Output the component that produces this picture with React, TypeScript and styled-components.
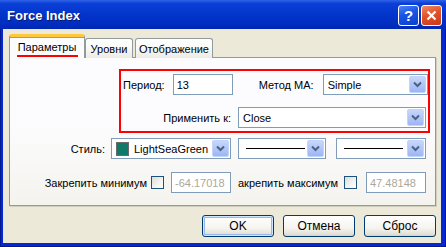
import React from 'react';
import styled, { createGlobalStyle, css } from 'styled-components';

const GlobalStyle = createGlobalStyle`
  html, body {
    margin: 0;
    padding: 0;
    background: #ffffff;
  }
  body {
    font-family: "Liberation Sans", Arial, sans-serif;
    font-size: 11px;
    color: #000000;
  }
`;

// окно
const Window = styled.div`
  width: 446px;
  height: 247px;
  box-sizing: border-box;
  display: flex;
  flex-direction: column;
  background: #0628d0;
  box-shadow: inset 1px 0 0 #001890, inset -1px 0 0 #001890, inset 0 -1px 0 #001890;
`;

const TitleBar = styled.div`
  height: 29px;
  flex: none;
  display: flex;
  align-items: center;
  padding: 0 4px 0 7px;
  background: linear-gradient(180deg, #2f63e6 0%, #0b40d8 12%, #0336cc 45%, #002dbf 85%, #0028b0 100%);
`;

const Title = styled.span`
  flex: 1;
  color: #ffffff;
  font-weight: bold;
  font-size: 13px;
  margin-top: 1px;
  text-shadow: 1px 1px 0 #0a1870;
`;

const CaptionButton = styled.div<{ $close?: boolean }>`
  width: 21px;
  height: 21px;
  box-sizing: border-box;
  margin-left: 2px;
  margin-top: 1px;
  border: 1px solid #ffffff;
  border-radius: 3px;
  display: flex;
  align-items: center;
  justify-content: center;
  color: #ffffff;
  font-weight: bold;
  font-size: 15px;
  background: linear-gradient(160deg, #4f84f2 0%, #1a56e6 40%, #0a40d0 100%);
  ${({ $close }) => $close && css`
    background: linear-gradient(160deg, #f08a66 0%, #e0522a 45%, #c9381a 100%);
  `}
`;

const Client = styled.div`
  flex: 1;
  margin: 0 5px 4px 3px;
  background: #ece9d8;
  padding: 6px 5px 0 6px;
  display: flex;
  flex-direction: column;
`;

// вкладки
const TabStrip = styled.div`
  height: 23px;
  display: flex;
  align-items: flex-end;
  margin-bottom: -1px;
  position: relative;
  z-index: 1;
`;

const Tab = styled.div<{ $active?: boolean; $width: number }>`
  width: ${({ $width }) => $width}px;
  height: 20px;
  box-sizing: border-box;
  border: 1px solid #919b9c;
  border-bottom: none;
  border-radius: 3px 3px 0 0;
  background: linear-gradient(180deg, #ffffff 0%, #fafaf8 40%, #ecebe5 100%);
  display: flex;
  align-items: center;
  justify-content: center;
  padding-top: 1px;
  margin-left: 2px;
  position: relative;

  ${({ $active }) => $active && css`
    height: 24px;
    margin-left: 0;
    margin-right: -2px;
    z-index: 2;
    background: #fcfcfe;
    border-top: 3px solid #ffc83c;
    box-shadow: inset 0 1px 0 #e68b2c;
    padding-top: 0;
    padding-bottom: 2px;
  `}
`;

const Underlined = styled.span`
  position: relative;
  &::after {
    content: '';
    position: absolute;
    left: -1px;
    right: -2px;
    bottom: -4px;
    height: 2px;
    background: #ff0000;
  }
`;

const Panel = styled.div`
  width: 427px;
  height: 149px;
  box-sizing: border-box;
  border: 1px solid #919b9c;
  background: linear-gradient(180deg, #fcfcfe 0%, #fcfcfe 45%, #f4f3ee 100%);
  box-shadow: 1px 1px 0 #d0cebf;
  padding: 11px 9px 0 0;
  display: flex;
  flex-direction: column;
`;

const Highlight = styled.div`
  margin-left: 109px;
  margin-right: -4px;
  border: 2px solid #ff0000;
  padding: 3px 2px 3px 2px;
  display: flex;
  flex-direction: column;
  gap: 12px;
`;

const Row = styled.div<{ $top?: number }>`
  display: flex;
  align-items: center;
  height: 21px;
  margin-top: ${({ $top }) => $top ?? 0}px;
`;

const Label = styled.div<{ $width?: number; $pad?: number; $left?: boolean }>`
  ${({ $width }) => ($width ? css`width: ${$width}px; flex: none;` : css`flex: 1;`)}
  box-sizing: border-box;
  text-align: ${({ $left }) => ($left ? 'left' : 'right')};
  padding-right: ${({ $pad }) => $pad ?? 0}px;
  white-space: nowrap;
`;

const TextInput = styled.div<{ $width: number; $disabled?: boolean }>`
  width: ${({ $width }) => $width}px;
  height: 21px;
  flex: none;
  box-sizing: border-box;
  border: 1px solid #7f9db9;
  background: #ffffff;
  padding-left: 3px;
  display: flex;
  align-items: center;
  color: ${({ $disabled }) => ($disabled ? '#aca899' : '#000000')};
`;

const Select = styled.div<{ $width: number; $gap?: number }>`
  width: ${({ $width }) => $width}px;
  height: 21px;
  flex: none;
  box-sizing: border-box;
  margin-left: ${({ $gap }) => $gap ?? 0}px;
  border: 1px solid #7f9db9;
  background: #ffffff;
  display: flex;
  align-items: center;
  padding: 1px;
`;

const SelectValue = styled.div`
  flex: 1;
  padding-left: 3px;
  display: flex;
  align-items: center;
  gap: 5px;
  overflow: hidden;
  white-space: nowrap;
`;

const DropButton = styled.div`
  width: 17px;
  height: 17px;
  flex: none;
  box-sizing: border-box;
  border: 1px solid #c3d3fd;
  border-radius: 2px;
  background: linear-gradient(180deg, #c7d6fb 0%, #b1c7f7 50%, #9cb6f4 100%);
  display: flex;
  align-items: center;
  justify-content: center;
`;

const Swatch = styled.div<{ $color: string }>`
  width: 13px;
  height: 14px;
  box-sizing: border-box;
  border: 1px solid #6b6b6b;
  background: ${({ $color }) => $color};
  flex: none;
`;

const LineSample = styled.div`
  width: 59px;
  height: 1px;
  margin-left: 3px;
  background: #000000;
`;

const Checkbox = styled.div<{ $gapRight: number }>`
  width: 13px;
  height: 13px;
  flex: none;
  box-sizing: border-box;
  border: 1px solid #1c5180;
  margin-right: ${({ $gapRight }) => $gapRight}px;
  background: linear-gradient(135deg, #dcdcd7 0%, #f4f4f0 60%, #ffffff 100%);
`;

// кнопки
const ButtonRow = styled.div`
  display: flex;
  justify-content: flex-end;
  gap: 9px;
  margin-top: 9px;
`;

const Button = styled.div<{ $default?: boolean }>`
  width: 72px;
  height: 22px;
  box-sizing: border-box;
  border: 1px solid #003c74;
  border-radius: 3px;
  background: linear-gradient(180deg, #ffffff 0%, #f5f4ef 60%, #e3e1d7 90%, #d6d0c5 100%);
  display: flex;
  align-items: center;
  justify-content: center;
  font-size: 12px;
  ${({ $default }) => $default && css`
    box-shadow: inset 0 0 0 1px #cee7ff, inset 0 0 0 2px #98b8ea;
  `}
`;

const Chevron = () => (
  <svg width="9" height="7" viewBox="0 0 9 7">
    <path d="M1 1.5 L4.5 5 L8 1.5" fill="none" stroke="#4d6185" strokeWidth="2" />
  </svg>
);

const Combo: React.FC<{ width: number; gap?: number; children: React.ReactNode }> = ({ width, gap, children }) => (
  <Select $width={width} $gap={gap}>
    <SelectValue>{children}</SelectValue>
    <DropButton><Chevron /></DropButton>
  </Select>
);

const App: React.FC = () => {
  return (
    <>
      <GlobalStyle />
      <Window>
        <TitleBar>
          <Title>Force Index</Title>
          <CaptionButton>?</CaptionButton>
          <CaptionButton $close>
            <svg width="11" height="11" viewBox="0 0 11 11">
              <path d="M1.5 1.5 L9.5 9.5 M9.5 1.5 L1.5 9.5" stroke="#ffffff" strokeWidth="2.2" />
            </svg>
          </CaptionButton>
        </TitleBar>
        <Client>
          <TabStrip>
            <Tab $active $width={76}><Underlined>Параметры</Underlined></Tab>
            <Tab $width={48}>Уровни</Tab>
            <Tab $width={78}>Отображение</Tab>
          </TabStrip>
          <Panel>
            <Highlight>
              <Row>
                <Label $pad={8}>Период:</Label>
                <TextInput $width={60}>13</TextInput>
                <Label $width={90} $pad={9}>Метод MA:</Label>
                <Combo width={105}>Simple</Combo>
              </Row>
              <Row>
                <Label $pad={7}>Применить к:</Label>
                <Combo width={188}>Close</Combo>
              </Row>
            </Highlight>
            <Row $top={5}>
              <Label $pad={6}>Стиль:</Label>
              <Combo width={120}>
                <Swatch $color="#0e7a68" />
                LightSeaGreen
              </Combo>
              <Combo width={88} gap={7}><LineSample /></Combo>
              <Combo width={90} gap={10}><LineSample /></Combo>
            </Row>
            <Row $top={13}>
              <Label $pad={4}>Закрепить минимум</Label>
              <Checkbox $gapRight={7} />
              <TextInput $width={60} $disabled>-64.17018</TextInput>
              <Label $width={113} $left style={{ paddingLeft: 7 }}>акрепить максимум</Label>
              <Checkbox $gapRight={9} />
              <TextInput $width={60} $disabled>47.48148</TextInput>
            </Row>
          </Panel>
          <ButtonRow>
            <Button $default>OK</Button>
            <Button>Отмена</Button>
            <Button>Сброс</Button>
          </ButtonRow>
        </Client>
      </Window>
    </>
  );
};

export default App;
